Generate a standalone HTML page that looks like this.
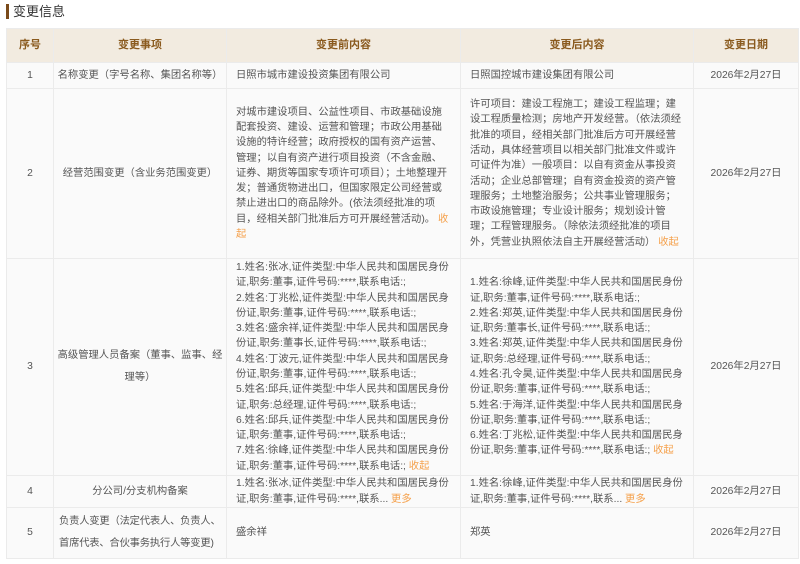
<!DOCTYPE html>
<html><head><meta charset="utf-8"><style>
body{margin:0;width:800px;height:564px;background:#fff;font-family:"Liberation Sans","Noto Sans CJK SC",sans-serif;color:#555;font-size:10.3px;overflow:hidden}
.t{position:absolute;left:6px;top:4px;font-size:13px;color:#333;border-left:3px solid #7a4a1a;padding-left:4px;line-height:15px}
table{position:absolute;left:6px;top:28px;border-collapse:collapse;table-layout:fixed;width:792px;background:#fafafa}
td,th{border:1px solid #ebebeb;padding:0 9px;vertical-align:middle;line-height:15.3px;overflow:hidden}
th{background:#f2ebe0;color:#8a5a1e;font-weight:bold;height:33px;font-size:11px}
td:nth-child(2){padding:0 2px}
.c{text-align:center}
.o{color:#f5a04a}
.l2{line-height:22px}
</style></head><body>
<div class="t">变更信息</div>
<table>
<colgroup><col style="width:47px"><col style="width:173px"><col style="width:234px"><col style="width:233px"><col style="width:105px"></colgroup>
<tr><th>序号</th><th>变更事项</th><th>变更前内容</th><th>变更后内容</th><th>变更日期</th></tr>
<tr style="height:26px"><td class="c">1</td><td class="c">名称变更（字号名称、集团名称等）</td><td>日照市城市建设投资集团有限公司</td><td>日照国控城市建设集团有限公司</td><td class="c">2026年2月27日</td></tr>
<tr style="height:170px"><td class="c">2</td><td class="c">经营范围变更（含业务范围变更）</td><td>对城市建设项目、公益性项目、市政基础设施配套投资、建设、运营和管理；市政公用基础设施的特许经营；政府授权的国有资产运营、管理；以自有资产进行项目投资（不含金融、证券、期货等国家专项许可项目）；土地整理开发；普通货物进出口，但国家限定公司经营或禁止进出口的商品除外。(依法须经批准的项目，经相关部门批准后方可开展经营活动)。 <span class="o">收起</span></td><td>许可项目：建设工程施工；建设工程监理；建设工程质量检测；房地产开发经营。（依法须经批准的项目，经相关部门批准后方可开展经营活动，具体经营项目以相关部门批准文件或许可证件为准）一般项目：以自有资金从事投资活动；企业总部管理；自有资金投资的资产管理服务；土地整治服务；公共事业管理服务；市政设施管理；专业设计服务；规划设计管理；工程管理服务。（除依法须经批准的项目外，凭营业执照依法自主开展经营活动） <span class="o">收起</span></td><td class="c">2026年2月27日</td></tr>
<tr style="height:217px"><td class="c">3</td><td class="c l2">高级管理人员备案（董事、监事、经理等）</td><td>1.姓名:张冰,证件类型:中华人民共和国居民身份证,职务:董事,证件号码:****,联系电话:;<br>2.姓名:丁兆松,证件类型:中华人民共和国居民身份证,职务:董事,证件号码:****,联系电话:;<br>3.姓名:盛余祥,证件类型:中华人民共和国居民身份证,职务:董事长,证件号码:****,联系电话:;<br>4.姓名:丁波元,证件类型:中华人民共和国居民身份证,职务:董事,证件号码:****,联系电话:;<br>5.姓名:邱兵,证件类型:中华人民共和国居民身份证,职务:总经理,证件号码:****,联系电话:;<br>6.姓名:邱兵,证件类型:中华人民共和国居民身份证,职务:董事,证件号码:****,联系电话:;<br>7.姓名:徐峰,证件类型:中华人民共和国居民身份证,职务:董事,证件号码:****,联系电话:; <span class="o">收起</span></td><td>1.姓名:徐峰,证件类型:中华人民共和国居民身份证,职务:董事,证件号码:****,联系电话:;<br>2.姓名:郑英,证件类型:中华人民共和国居民身份证,职务:董事长,证件号码:****,联系电话:;<br>3.姓名:郑英,证件类型:中华人民共和国居民身份证,职务:总经理,证件号码:****,联系电话:;<br>4.姓名:孔令昊,证件类型:中华人民共和国居民身份证,职务:董事,证件号码:****,联系电话:;<br>5.姓名:于海洋,证件类型:中华人民共和国居民身份证,职务:董事,证件号码:****,联系电话:;<br>6.姓名:丁兆松,证件类型:中华人民共和国居民身份证,职务:董事,证件号码:****,联系电话:; <span class="o">收起</span></td><td class="c">2026年2月27日</td></tr>
<tr style="height:32px"><td class="c">4</td><td class="c">分公司/分支机构备案</td><td>1.姓名:张冰,证件类型:中华人民共和国居民身份证,职务:董事,证件号码:****,联系... <span class="o">更多</span></td><td>1.姓名:徐峰,证件类型:中华人民共和国居民身份证,职务:董事,证件号码:****,联系... <span class="o">更多</span></td><td class="c">2026年2月27日</td></tr>
<tr style="height:51px"><td class="c">5</td><td class="l2" style="padding:0 0 0 5px;white-space:nowrap;letter-spacing:-0.2px">负责人变更（法定代表人、负责人、<br>首席代表、合伙事务执行人等变更)</td><td>盛余祥</td><td>郑英</td><td class="c">2026年2月27日</td></tr>
</table>
</body></html>
